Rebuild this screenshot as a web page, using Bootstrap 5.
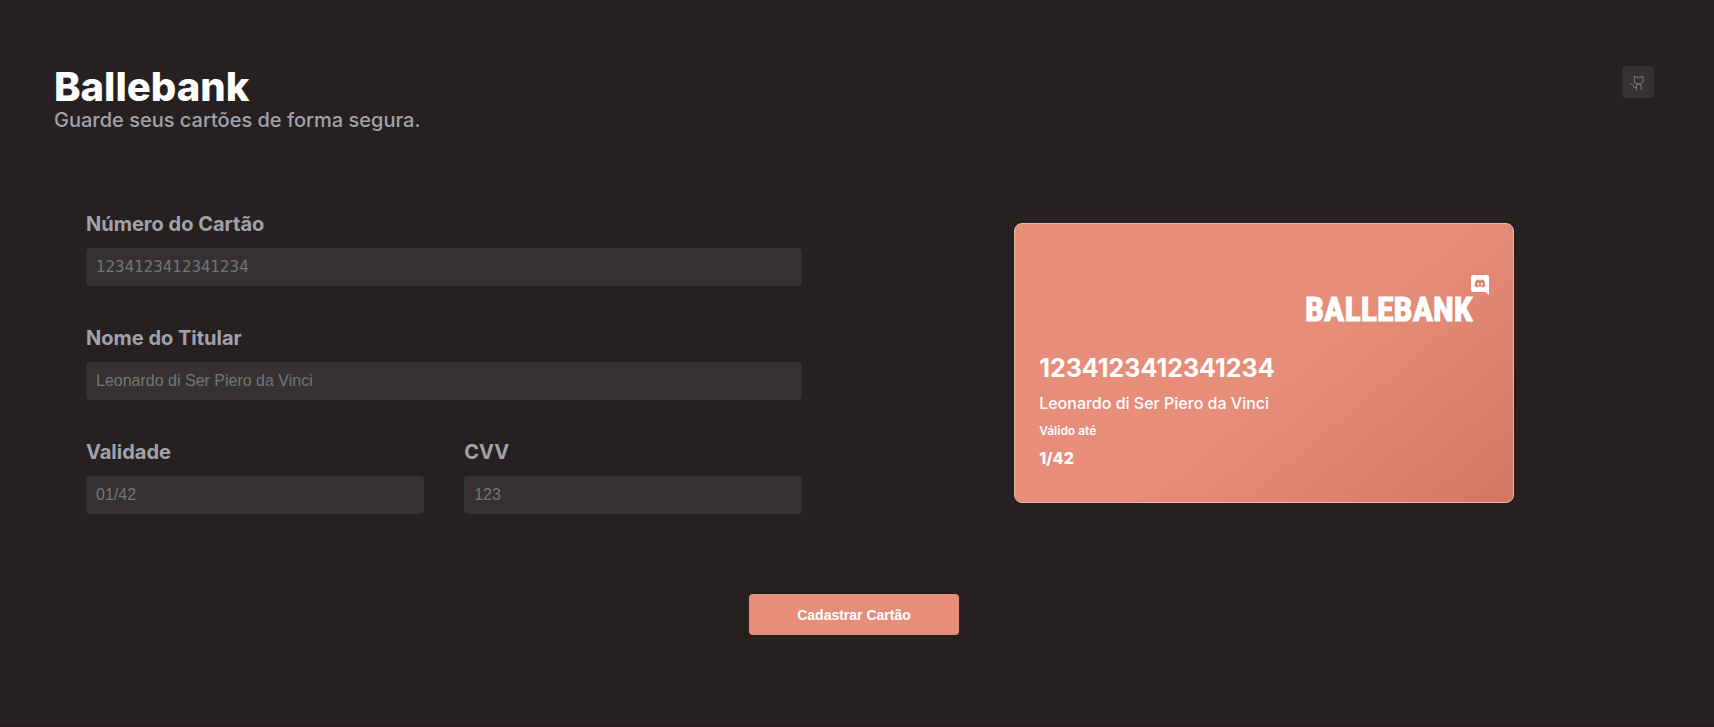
<!DOCTYPE html>
<html lang="pt-BR">
<head>
<meta charset="utf-8">
<meta name="viewport" content="width=device-width, initial-scale=1">
<title>Ballebank</title>
<link href="https://cdn.jsdelivr.net/npm/bootstrap@5.3.0/dist/css/bootstrap.min.css" rel="stylesheet">
<style>
:root { --ink: #262020; --panel: #353132; --muted: #a1a1aa; --coral: #e78e7b; }
body { background: var(--ink); color: #fff; font-family: Inter, sans-serif; min-height: 100vh; border-bottom: 2px solid #2b1a1d; }
.page-head { padding: 66px 60px 0 54px; }
.brand-title { font-size: 40px; line-height: 42px; font-weight: 800; }
.brand-sub { font-size: 20px; line-height: 24px; font-weight: 500; color: var(--muted); }
.repo-btn { width: 32px; height: 32px; background: var(--panel); color: #7c7c86; border-radius: 4px; }
.form-area { margin-top: 80px; padding-left: 86px; gap: 12px; }
.fields { width: 44%; gap: 40px; }
.fields-pair { gap: 40px; }
.field-label { font-size: 20px; line-height: 24px; font-weight: 700; color: var(--muted); margin-bottom: 12px; }
.field-box { height: 38px; padding: 0 10px; background: var(--panel); border: 0; border-radius: 4px; color: #fff; font: 16px "Liberation Sans", sans-serif; }
.field-box::placeholder { color: #757575; }
.field-box.digits { font: 15px "DejaVu Sans", sans-serif; }
.field-box:focus { background: var(--panel); color: #fff; }
.bank-card { width: 500px; min-height: 280px; padding: 51px 24px 32px; gap: 8px; border: 1px solid #e9b9ad; border-radius: 8px; background: linear-gradient(140deg, var(--coral) 52%, #d27764); }
.logo-art { width: 184px; height: 48px; margin-bottom: 22px; overflow: visible; }
.logo-art text { font: 700 34px "Roboto Condensed", "Liberation Sans Narrow", sans-serif; }
.card-num { font-size: 25px; line-height: 30px; font-weight: 700; }
.card-name { font-size: 16px; line-height: 24px; font-weight: 500; }
.card-valid { font-size: 12px; line-height: 16px; font-weight: 600; }
.card-date { font-size: 16px; line-height: 22px; font-weight: 800; }
.send-row { margin-top: 80px; padding-right: 6px; }
.send-btn { width: 210px; height: 41px; background: var(--coral); color: #fff; border: 0; border-radius: 4px; font: bold 14px "Liberation Sans", sans-serif; }
</style>
</head>
<body class="d-flex flex-column">
<header class="page-head d-flex justify-content-between align-items-start">
  <div>
    <h1 class="brand-title m-0">Ballebank</h1>
    <p class="brand-sub m-0">Guarde seus cartões de forma segura.</p>
  </div>
  <a class="repo-btn d-flex align-items-center justify-content-center" href="#" aria-label="GitHub">
    <svg width="16" height="16" viewBox="0 0 16 16" fill="none" stroke="currentColor" stroke-linejoin="round" stroke-linecap="round"><path d="M6.500 15.500V12a2 2 0 0 1 2-2h.500a2 2 0 0 1 2 2v3.500M6.500 13.500H5A1.800 1.800 0 0 1 3.200 11.700 2.200 2.200 0 0 0 .8 9.500M7 10A3 3 0 0 1 4.200 7V5.500L4.500 4V2L6.800 3.300H10.500L12.800 2V4L13.200 5.500V7A3 3 0 0 1 10.500 10Z"/></svg>
  </a>
</header>
<form>
  <div class="form-area d-flex align-items-center">
    <div class="fields d-flex flex-column flex-shrink-0">
      <div><label class="field-label d-block" for="numero">Número do Cartão</label><input class="field-box digits form-control" id="numero" placeholder="1234123412341234"></div>
      <div><label class="field-label d-block" for="titular">Nome do Titular</label><input class="field-box form-control" id="titular" placeholder="Leonardo di Ser Piero da Vinci"></div>
      <div class="d-flex fields-pair">
        <div class="flex-fill"><label class="field-label d-block" for="validade">Validade</label><input class="field-box form-control" id="validade" placeholder="01/42"></div>
        <div class="flex-fill"><label class="field-label d-block" for="cvv">CVV</label><input class="field-box form-control" id="cvv" placeholder="123"></div>
      </div>
    </div>
    <div class="flex-grow-1 d-flex justify-content-center">
      <section class="bank-card d-flex flex-column">
        <svg class="logo-art align-self-end" viewBox="0 0 184 48" role="img" aria-label="Ballebank">
          <text x="0" y="46" fill="#fff" stroke="#fff">BALLEBANK</text>
          <path fill="#fff" d="M168 0h14q2 0 2 2v18l-4-3h-12q-2 0-2-2V2q0-2 2-2z"/>
          <path fill="#dd8471" d="M171.500 5l2-.7.6.9h1.800l.6-.9 2 .7c1.200 1.600 2 3.800 1.900 6.200-.9.8-1.800 1.200-2.800 1.300l-.7-1.200h-3.800l-.7 1.200c-1-.1-1.900-.5-2.800-1.300-.1-2.400.7-4.600 1.900-6.200z"/>
          <circle cx="173.200" cy="9" r="1.100" fill="#fff"/><circle cx="176.800" cy="9" r="1.100" fill="#fff"/>
        </svg>
        <div class="card-num">1234123412341234</div>
        <div class="card-name">Leonardo di Ser Piero da Vinci</div>
        <div class="card-valid">Válido até</div>
        <div class="card-date">1/42</div>
      </section>
    </div>
  </div>
  <div class="send-row text-center"><button class="send-btn" type="submit">Cadastrar Cartão</button></div>
</form>
<script src="https://cdn.jsdelivr.net/npm/bootstrap@5.3.0/dist/js/bootstrap.bundle.min.js"></script>
</body>
</html>
